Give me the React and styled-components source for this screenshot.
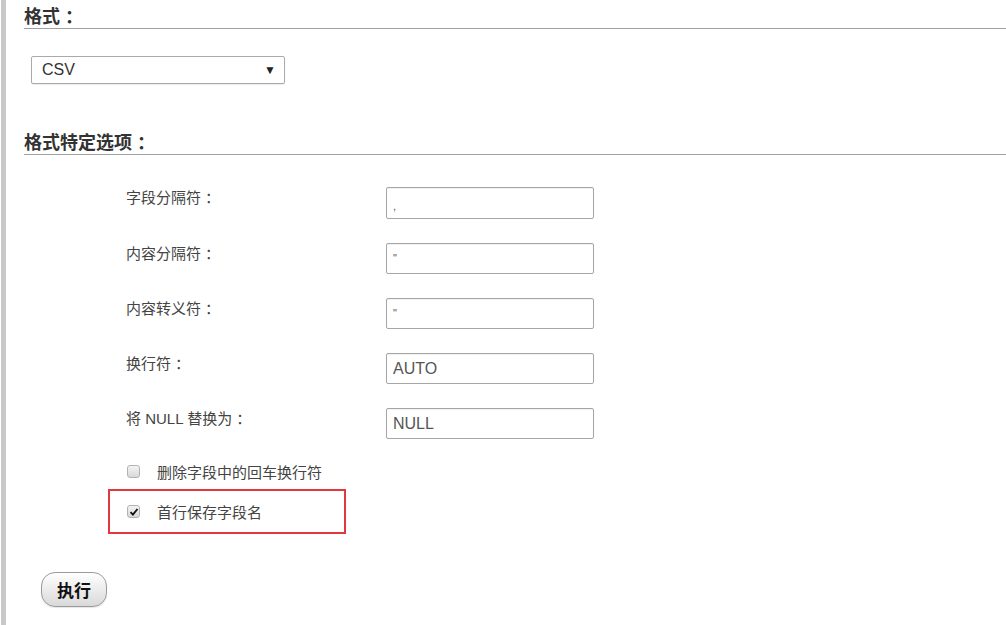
import React from "react";
import styled, { createGlobalStyle } from "styled-components";

const Global = createGlobalStyle`
  html, body { margin: 0; padding: 0; background: #fff; }
  body { font-family: "Liberation Sans", "Noto Sans CJK SC", sans-serif; color: #444; }
`;

const Page = styled.div`
  margin-left: 1px;
  border-left: 5px solid #c8c8c8;
  min-height: 625px;
  box-sizing: border-box;
  padding-top: 6px;
`;

const Heading = styled.h2`
  margin: ${(p) => p.$top}px 0 0 18px;
  font-size: 18px;
  font-weight: bold;
  line-height: 22px;
  color: #333;
  border-bottom: 1px solid #a0a0a0;
`;

const Colon = styled.span`
  margin-left: ${(p) => p.$gap || 4}px;
`;

const SelectBox = styled.div`
  margin: 27px 0 0 25px;
  width: 254px;
  height: 28px;
  box-sizing: border-box;
  border: 1px solid #aaa;
  border-radius: 2px;
  box-shadow: 0 1px 1px rgba(0, 0, 0, 0.08);
  display: flex;
  align-items: center;
  justify-content: space-between;
  padding: 0 8px 0 10px;
  font-size: 16px;
  color: #333;
`;

const Arrow = styled.span`
  font-size: 12px;
  color: #222;
`;

const Form = styled.div`
  margin: 32px 0 0 120px;
  display: flex;
  flex-direction: column;
  gap: 24px;
`;

const Row = styled.div`
  display: flex;
  align-items: flex-start;
`;

const Label = styled.div`
  width: 260px;
  margin-top: 1px;
  font-size: 15px;
  line-height: 20px;
  color: #444;
`;

const TextInput = styled.div`
  width: 208px;
  height: ${(p) => (p.$tall ? 32 : 31)}px;
  box-sizing: border-box;
  border: 1px solid #a6a6a6;
  border-radius: 2px;
  box-shadow: inset 0 1px 1px rgba(0, 0, 0, 0.06);
  display: flex;
  align-items: ${(p) => (p.$low ? "flex-end" : "center")};
  padding: ${(p) => (p.$low ? "0 0 6px 6px" : "0 0 0 6px")};
  font-size: ${(p) => (p.$small ? "11px" : "16px")};
  line-height: 1;
  color: #555;
`;

const Checks = styled.div`
  margin: 22px 0 0 102px;
  display: flex;
  flex-direction: column;
`;

const CheckRow = styled.div`
  display: flex;
  align-items: center;
  height: 20px;
  padding-left: 19px;
  font-size: 15px;
  color: #444;
  margin-bottom: 8px;
`;

const Marked = styled.div`
  width: 238px;
  height: 45px;
  box-sizing: border-box;
  border: 2px solid #e0383d;
  display: flex;
  align-items: center;
  padding-left: 17px;
  font-size: 15px;
  color: #444;
`;

const Box = styled.span`
  width: 13px;
  height: 13px;
  box-sizing: border-box;
  border: 1px solid #b3b3b3;
  border-radius: 3px;
  background: linear-gradient(#f4f4f4, #d8d8d8);
  margin-right: 17px;
  display: flex;
  align-items: center;
  justify-content: center;
  flex-shrink: 0;
`;

const Button = styled.button`
  margin: 38px 0 0 35px;
  width: 66px;
  height: 35px;
  border: 1px solid #9a9a9a;
  border-radius: 14px;
  background: linear-gradient(#ffffff, #d9d9d9);
  box-shadow: 0 1px 1px rgba(0, 0, 0, 0.1);
  font-family: "Liberation Sans", "Noto Sans CJK SC", sans-serif;
  font-weight: bold;
  font-size: 17px;
  color: #111;
  padding: 0;
  cursor: pointer;
`;

const Check = () => (
  <svg width="10" height="10" viewBox="0 0 10 10">
    <path d="M1.5 5.2 L3.9 7.6 L8.5 2" fill="none" stroke="#111" strokeWidth="1.8" />
  </svg>
);

const fields = [
  { label: "字段分隔符", value: ",", low: true, small: true, tall: true },
  { label: "内容分隔符", value: "\"", small: true },
  { label: "内容转义符", value: "\"", small: true },
  { label: "换行符", value: "AUTO" },
  { label: "将 NULL 替换为", value: "NULL" },
];

export default function App() {
  return (
    <>
      <Global />
      <Page>
        <Heading $top={0}>
          格式<Colon $gap={5}>：</Colon>
        </Heading>
        <SelectBox>
          <span>CSV</span>
          <Arrow>▼</Arrow>
        </SelectBox>
        <Heading $top={48}>
          格式特定选项<Colon $gap={5}>：</Colon>
        </Heading>
        <Form>
          {fields.map((f) => (
            <Row key={f.label}>
              <Label>
                {f.label}
                <Colon>：</Colon>
              </Label>
              <TextInput $low={f.low} $small={f.small} $tall={f.tall}>
                {f.value}
              </TextInput>
            </Row>
          ))}
        </Form>
        <Checks>
          <CheckRow>
            <Box />
            删除字段中的回车换行符
          </CheckRow>
          <Marked>
            <Box>
              <Check />
            </Box>
            首行保存字段名
          </Marked>
        </Checks>
        <Button>执行</Button>
      </Page>
    </>
  );
}
